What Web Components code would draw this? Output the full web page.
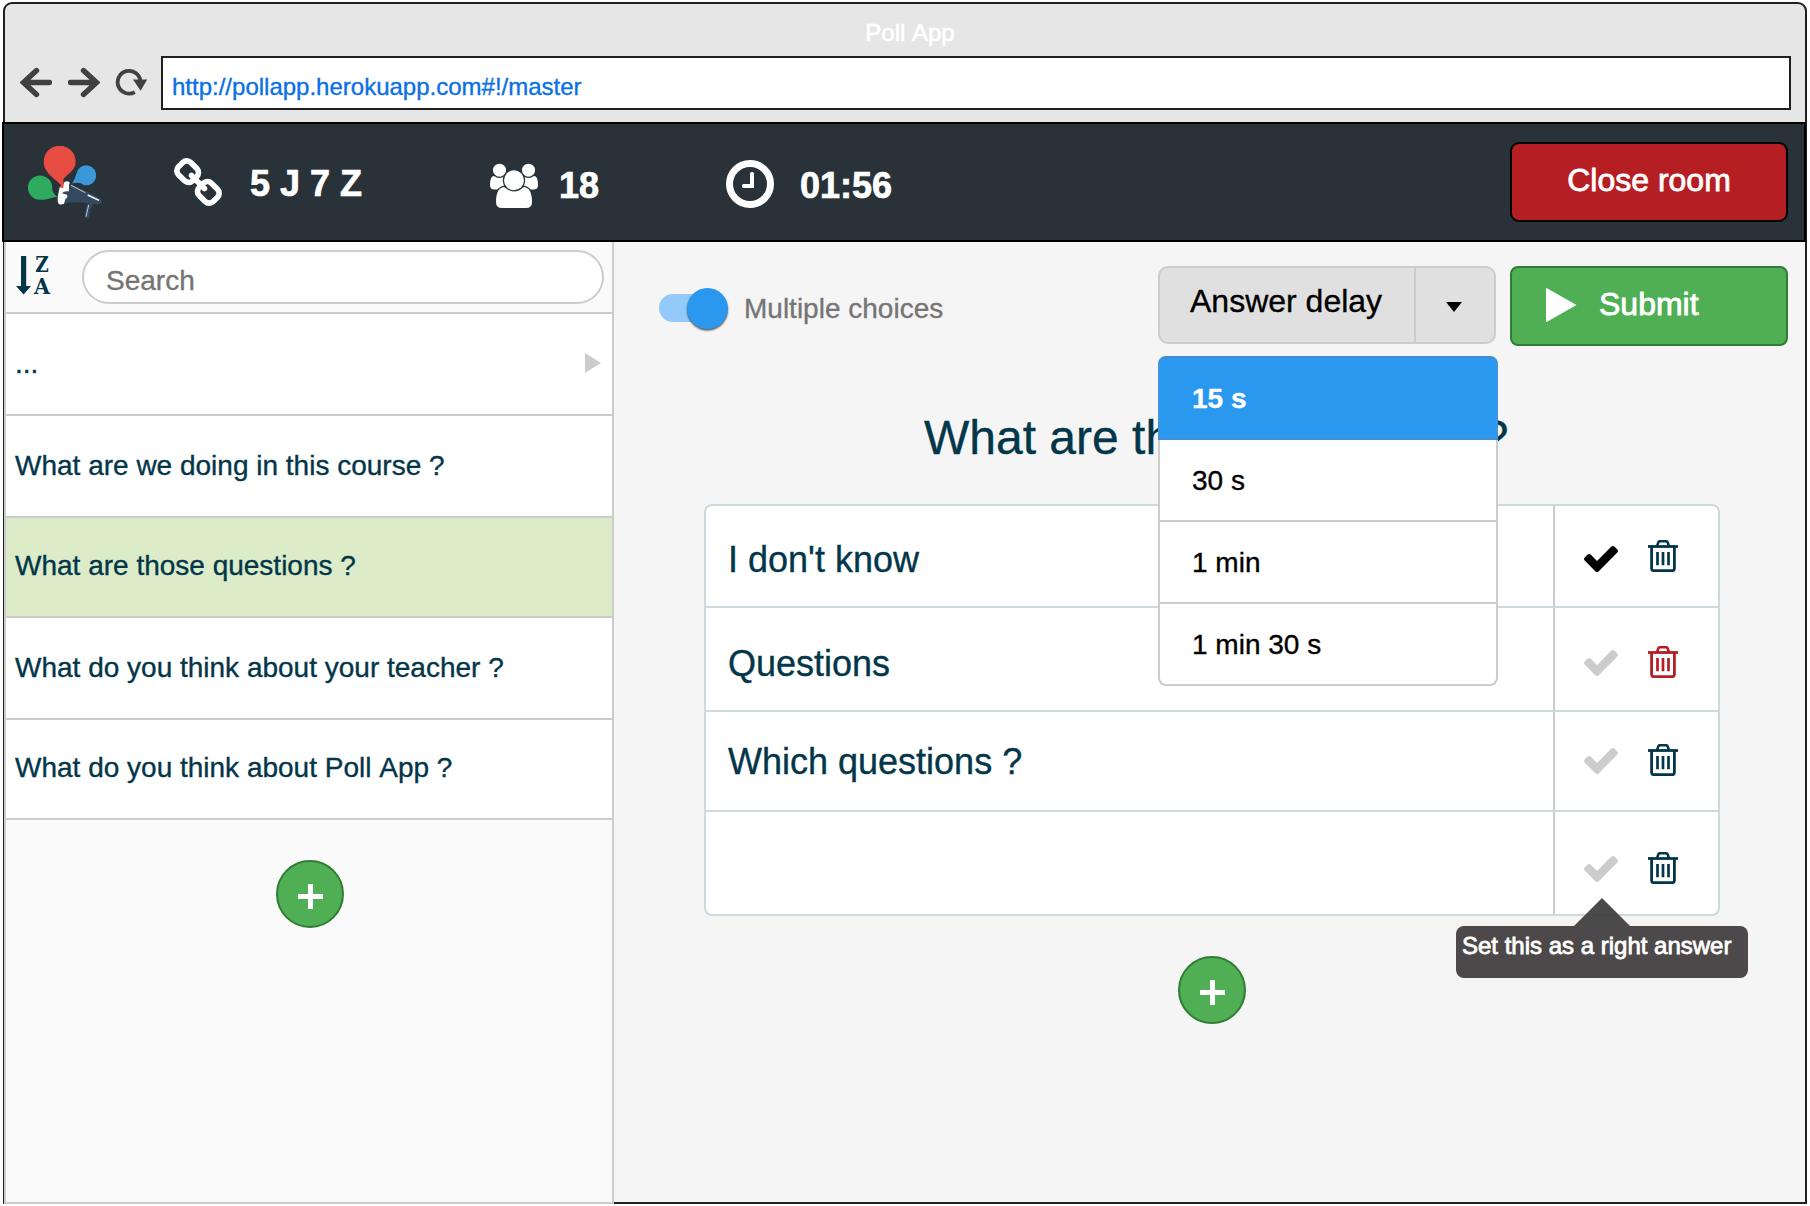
<!DOCTYPE html>
<html lang="en">
<head>
<meta charset="utf-8">
<title>Poll App</title>
<style>
  html, body { margin: 0; height: 100%; background: #fff; overflow: hidden; }
  body { font-family: "Liberation Sans", Arial, sans-serif; color: #033649; font-kerning: none; -webkit-text-stroke: .35px currentColor; }
</style>
</head>
<body>
<app-window heading="Poll App" url="http://pollapp.herokuapp.com#!/master">
  <room-header slot="header" code="5 J 7 Z" people="18" time="01:56">Close room</room-header>
  <question-sidebar slot="sidebar">
    <question-item folder style="--h:102px;--dy:-1px">...</question-item>
    <question-item style="--h:102px;--dy:0px">What are we doing in this course ?</question-item>
    <question-item selected style="--h:100px;--dy:-2px">What are those questions ?</question-item>
    <question-item style="--h:102px;--dy:0px">What do you think about your teacher ?</question-item>
    <question-item style="--h:100px;--dy:-2px">What do you think about Poll App ?</question-item>
  </question-sidebar>
  <question-editor slot="main" heading="What are those questions ?">
    <answer-row right style="--h:102px;--text:7px;--check:6px;--trash:0px">I don't know</answer-row>
    <answer-row danger style="--h:104px;--text:9px;--check:8px;--trash:6px">Questions</answer-row>
    <answer-row style="--h:100px;--text:1px;--check:0px;--trash:-2px">Which questions ?</answer-row>
    <answer-row tip="Set this as a right answer" style="--h:102px;--text:0px;--check:12px;--trash:10px"></answer-row>
  </question-editor>
</app-window>

<script>
const ICONS = {
  back: ['20 66.500 32 32', 32, 32, '<path d="M49.500 82H24M36.500 70L23.500 82L36.500 94" fill="none" stroke="#414141" stroke-width="5.400" stroke-linecap="round" stroke-linejoin="miter"/>'],
  forward: ['68 66.500 32 32', 32, 32, '<path d="M70.500 82H96M83.500 70L96.500 82L83.500 94" fill="none" stroke="#414141" stroke-width="5.400" stroke-linecap="round" stroke-linejoin="miter"/>'],
  reload: ['115 66.500 33 32', 33, 32, '<path d="M134.800 91.600A11.400 11.400 0 1 1 140.400 80.500" fill="none" stroke="#414141" stroke-width="3.800"/><path d="M133 79L147.200 79L140.600 90.200Z" fill="#414141"/>'],
  logo: ['84 48 222 216', 74, 72, `
    <path d="M190 175C180 152 131 135 131 95A48 48 0 1 1 227 95C227 125 193 136 190 150Z" fill="#e64c42"/>
    <path d="M172 200C150 204 143 209 120 209.500A36.500 36.500 0 1 1 156.500 173Q156 190 172 200Z" fill="#2eab61"/>
    <path d="M216 160C226 146 227 136 229 132A30 30 0 1 1 251 165Q240 154 216 160Z" fill="#3b98d9"/>
    <path d="M186 172L194 155Q207 151 210 160L212 184L198 216Q186 228 176 221Q171 215 174 196L179 172Z" fill="#fff"/>
    <path d="M207 160L292 200Q306 206 306 219Q299 226 282 221Q272 228 267 263L254 263L261 219Q225 214 192 221L196 207Q205 202 201 194L186 190Q191 182 207 184Z" fill="#34495e"/>
    <path d="M213 166L256 188M266 225L258 260" fill="none" stroke="#dfe4e8" stroke-width="2.600"/>
    <path d="M263 195L297 211" fill="none" stroke="#fff" stroke-width="4.500"/>
    <path d="M179 171L191 157L190 175Z" fill="#e64c42"/>`],
  link: ['80 16 1632 1632', 48, 48, '<path fill="#fff" d="M1520 1216q0-40-28-68l-208-208q-28-28-68-28-42 0-72 32 3 3 19 18.500t21.500 21.500 15 19 13 25.500 3.500 27.500q0 40-28 68t-68 28q-15 0-27.500-3.500t-25.500-13-19-15-21.500-21.500-18.500-19q-33 31-33 73 0 40 28 68l206 207q27 27 68 27 40 0 68-26l147-146q28-28 28-67zm-703-705q0-40-28-68l-206-207q-28-28-68-28-39 0-68 27l-147 146q-28 28-28 67 0 40 28 68l208 208q27 27 68 27 42 0 72-31-3-3-19-18.500t-21.500-21.500-15-19-13-25.500-3.500-27.500q0-40 28-68t68-28q15 0 27.500 3.500t25.500 13 19 15 21.500 21.500 18.500 19q33-31 33-73zm895 705q0 120-85 203l-147 146q-83 83-203 83-121 0-204-85l-206-207q-83-83-83-203 0-123 88-209l-88-88q-86 88-208 88-120 0-204-84l-208-208q-84-84-84-204t85-203l147-146q83-83 203-83 121 0 204 85l206 207q83 83 83 203 0 123-88 209l88 88q86-88 208-88 120 0 204 84l208 208q84 84 84 204z"/>'],
  users: ['490 163 48 46', 48, 46, `<g fill="#fff">
    <path d="M494 176Q499.500 180 505 176L508 189.500H494.500Q490 189.500 490 185Q490 176 494 176Z"/>
    <path d="M534 176Q528.500 180 523 176L520 189.500H533.500Q538 189.500 538 185Q538 176 534 176Z"/>
    <circle cx="499.500" cy="170.200" r="6.500" stroke="#283238" stroke-width="1.600" paint-order="stroke"/><circle cx="528.500" cy="170.200" r="6.500" stroke="#283238" stroke-width="1.600" paint-order="stroke"/>
    <path d="M504 187Q514 194 524 187Q532 188 532 202Q532 208 526 208H502Q496 208 496 202Q496 188 504 187Z" stroke="#283238" stroke-width="2.400" paint-order="stroke"/>
    <circle cx="514" cy="180.300" r="10" stroke="#283238" stroke-width="2.400" paint-order="stroke"/></g>`],
  clock: ['0 0 48 48', 48, 48, '<circle cx="24" cy="24" r="20.500" fill="none" stroke="#fff" stroke-width="7"/><path d="M24 13.500Q24 12 25.500 12H26.500Q28 12 28 13.500V28H17.500Q16 28 16 26.500V25.500Q16 24 17.500 24H24Z" fill="#fff"/>'],
  sort: ['10 243 50 64', 50, 64, `<path d="M21 256H26.200V286H31L23.600 294.500L16 286H21Z" fill="#033649"/>
    <text x="35.300" y="272" textLength="13.500" lengthAdjust="spacingAndGlyphs" font-family="DejaVu Serif, serif" font-weight="bold" font-size="21.500" fill="#033649">Z</text>
    <text x="34" y="294" textLength="16" lengthAdjust="spacingAndGlyphs" font-family="DejaVu Serif, serif" font-weight="bold" font-size="21.500" fill="#033649">A</text>`],
  arrow: ['0 0 16 20', 16, 20, '<path d="M0 0L16 10L0 20Z" fill="#ccc"/>'],
  play: ['0 0 31 34', 31, 34, '<path d="M0 0.500Q0 -.4 1 .2L30.500 17L1 33.800Q0 34.400 0 33.500Z" fill="#fff"/>'],
  caret: ['0 0 16 10', 16, 10, '<path d="M0 0H16L8 10Z" fill="#000"/>'],
  plus: ['0 0 25 25', 25, 25, '<path d="M10 0H15V10H25V15H15V25H10V15H0V10H10Z" fill="#fff"/>'],
  check: ['121 334 1550 1188', 34, 26, '<path fill="currentColor" d="M1671 566q0 40-28 68l-724 724-136 136q-28 28-68 28t-68-28l-136-136-362-362q-28-28-28-68t28-68l136-136q28-28 68-28t68 28l294 295 656-657q28-28 68-28t68 28l136 136q28 28 28 68z"/>'],
  trash: ['0 0 30 32', 30, 32, '<g fill="none" stroke="currentColor"><path d="M0 6.500H30" stroke-width="2.800"/><path d="M9 6.500L10.200 2.600Q10.700 1.200 12 1.200H18Q19.300 1.200 19.800 2.600L21 6.500" stroke-width="2.600"/><path d="M3.600 7V28.500Q3.600 30.700 5.800 30.700H24.200Q26.400 30.700 26.400 28.500V7" stroke-width="2.800"/><path d="M9.500 12V25.300M15 12V25.300M20.500 12V25.300" stroke-width="2.700"/></g>']
};

function define(name, render) {
  customElements.define(name, class extends HTMLElement {
    connectedCallback() {
      if (this.shadowRoot) return;
      this.attachShadow({ mode: 'open' }).innerHTML = render(this);
    }
  });
}

define('ui-icon', el => {
  const [box, w, h, body] = ICONS[el.getAttribute('name')];
  return `<style>:host{display:block;flex:none;width:${w}px;height:${h}px;-webkit-text-stroke:0}svg{display:block}</style>
    <svg width="${w}" height="${h}" viewBox="${box}">${body}</svg>`;
});

define('add-button', () => `<style>
  :host{display:flex;flex:none;box-sizing:border-box;width:68px;height:68px;border:2px solid #2e7d32;border-radius:50%;background:#50af55;align-items:center;justify-content:center;padding:5px 0 0 1px}
  </style><ui-icon name="plus"></ui-icon>`);

define('app-window', el => `<style>
  :host{display:flex;flex-direction:column;box-sizing:border-box;width:1804px;height:1202px;margin:2px 3px;border:2px solid #231f20;border-radius:9px 9px 0 0;background:#e6e6e6}
  .chrome{height:118px;box-sizing:border-box;flex:none;padding:0 14px 12px 15px;display:flex;flex-direction:column}
  .title{height:52px;line-height:58px;text-align:center;color:#fff;font-size:24px;padding-left:9px;-webkit-text-stroke:.7px #fff}
  .bar{display:flex;align-items:center;height:54px}
  .bar ui-icon+ui-icon{margin-left:16px}
  .bar ui-icon:nth-of-type(3){margin-left:15px}
  .url{flex:1;box-sizing:border-box;height:54px;margin-left:13px;border:2px solid #231f20;background:#fff;color:#0b6fe6;font-size:24px;line-height:57px;padding-left:9px}
  .page{flex:1;display:flex;min-height:0}
  ::slotted([slot=main]){flex:1;min-width:0}
  </style>
  <div class="chrome">
    <div class="title">${el.getAttribute('heading')}</div>
    <div class="bar"><ui-icon name="back"></ui-icon><ui-icon name="forward"></ui-icon><ui-icon name="reload"></ui-icon><div class="url">${el.getAttribute('url')}</div></div>
  </div>
  <slot name="header"></slot>
  <div class="page"><slot name="sidebar"></slot><slot name="main"></slot></div>`);

define('room-header', el => `<style>
  :host{display:flex;flex:none;box-sizing:border-box;height:120px;margin:0 -1px 0 -3px;border:2px solid #000;background:#283238;color:#fff;font-weight:bold;font-size:36px;line-height:40px;align-items:flex-start;padding:18px 16px 0 24px}
  .stat{display:flex}
  .stat span{-webkit-text-stroke:.7px #fff}
  .link{margin:16px 0 0 72px;gap:28px;width:190px}
  .link span{margin-top:6px}
  .users{margin:21px 0 0 126px;gap:21px;width:110px}
  .users span{margin-top:3px}
  .clock{margin:18px 0 0 126px;gap:26px}
  .clock span{margin-top:6px}
  button{all:unset;box-sizing:border-box;margin-left:auto;width:278px;height:80px;border:2px solid #000;border-radius:9px;background:#b51e23;font:32px "Liberation Sans",sans-serif;line-height:40px;padding-bottom:5px;text-align:center;color:#fff;-webkit-text-stroke:.8px #fff}
  </style>
  <ui-icon name="logo" style="margin-top:4px"></ui-icon>
  <div class="stat link"><ui-icon name="link"></ui-icon><span>${el.getAttribute('code')}</span></div>
  <div class="stat users"><ui-icon name="users"></ui-icon><span>${el.getAttribute('people')}</span></div>
  <div class="stat clock"><ui-icon name="clock"></ui-icon><span>${el.getAttribute('time')}</span></div>
  <button><slot></slot></button>`);

define('question-sidebar', () => `<style>
  :host{display:flex;flex-direction:column;flex:none;box-sizing:border-box;width:610px;margin:0 0 -2px -1px;border:2px solid #ccc;border-top:0;background:#fafafa;font-size:28px}
  .tools{display:flex;flex:none;box-sizing:border-box;height:72px;border-bottom:2px solid #ccc;padding:8px 8px 0 4px}
  .tools ui-icon{margin-top:-7px}
  .search{flex:1;box-sizing:border-box;height:54px;margin-left:22px;border:2px solid #ccc;border-radius:27px;background:#fff;color:#757575;line-height:57px;padding-left:22px}
  add-button{margin:40px 0 0 270px}
  </style>
  <div class="tools"><ui-icon name="sort"></ui-icon><div class="search">Search</div></div>
  <slot></slot><add-button></add-button>`);

define('question-item', el => `<style>
  :host{display:flex;flex:none;box-sizing:border-box;height:var(--h);border-bottom:2px solid #ccc;background:#fff;align-items:center;justify-content:space-between;padding:0 11px 0 9px}
  :host([selected]){background:#dcebc8}
  span{line-height:32px;margin-top:var(--dy)}
  ui-icon{margin-top:-2px}
  </style><span><slot></slot></span>${el.hasAttribute('folder') ? '<ui-icon name="arrow"></ui-icon>' : ''}`);

define('toggle-switch', () => `<style>
  :host{display:flex;align-items:center;gap:16px;height:40px;font-size:28px;line-height:40px;color:#757575}
  .track{display:flex;align-items:center;justify-content:flex-end;width:69px;height:28px;border-radius:14px;background:linear-gradient(90deg,#94caf9 55px,transparent 55px)}
  .knob{width:41px;height:41px;flex:none;border-radius:50%;background:#2b98f0;box-shadow:0 1.500px 2px rgba(0,0,0,.65)}
  span{padding-top:2px}
  </style><div class="track"><div class="knob"></div></div><span><slot></slot></span>`);

define('delay-menu', () => `<style>
  :host{position:absolute;z-index:3;left:0;top:90px;width:340px;box-sizing:border-box;height:330px;display:flex;flex-direction:column;border:2px solid #ccc;border-radius:8px;background:#fff;font-size:28px;color:#000}
  div{box-sizing:border-box;height:82px;border-bottom:2px solid #ccc;line-height:82px;padding-left:32px}
  div:last-child{border:0}
  .on{height:84px;margin:-2px -2px 0;border:2px solid #418fd1;border-left-color:#3f94dd;border-right-color:#3f94dd;border-radius:8px 8px 0 0;background:#2b98f0;color:#fff;font-weight:bold;line-height:82px}
  </style><div class="on">15 s</div><div>30 s</div><div>1 min</div><div>1 min 30 s</div>`);

define('delay-select', () => `<style>
  :host{display:flex;position:relative;box-sizing:border-box;width:338px;height:78px;border:2px solid #ccc;border-radius:10px;background:#e0e0e0;color:#000;font-size:32px}
  .label{width:256px;box-sizing:border-box;border-right:2px solid #ccc;padding-left:30px;line-height:66px}
  .more{padding:34px 0 0 30px}
  delay-menu{left:-2px;top:88px}
  </style><div class="label"><slot></slot></div><div class="more"><ui-icon name="caret"></ui-icon></div><delay-menu></delay-menu>`);

define('submit-button', () => `<style>
  :host{display:flex;box-sizing:border-box;width:278px;height:80px;border:2px solid #2e7d32;border-radius:8px;background:#50af55;color:#fff;font-size:32px;line-height:73px;padding-left:34px;-webkit-text-stroke:.8px #fff}
  ui-icon{margin:20px 22px 0 0}
  </style><ui-icon name="play"></ui-icon><slot></slot>`);

define('answer-tip', () => `<style>
  :host{position:absolute;z-index:2;left:-128px;top:42px;width:292px;display:block}
  .tri{width:56px;height:28px;margin-left:118px;background:rgba(64,64,64,.95);clip-path:polygon(50% 0,100% 100%,0 100%)}
  .box{height:52px;border-radius:8px;background:#4d4849;color:#fff;font-size:24px;line-height:40px;padding-left:6px;white-space:nowrap;-webkit-text-stroke:.8px #fff}
  </style><div class="tri"></div><div class="box"><slot></slot></div>`);

define('answer-row', el => `<style>
  :host{display:flex;box-sizing:border-box;height:var(--h);border-bottom:2px solid #cfd8dc;font-size:36px}
  :host(:last-of-type){border-bottom:0}
  .text{flex:1;display:flex;align-items:center;padding-left:22px;border-right:2px solid #ccc}
  .text span{line-height:40px;margin-top:var(--text)}
  .actions{width:163px;box-sizing:border-box;padding-left:29px;display:flex;align-items:center;gap:30px}
  .check{position:relative;color:${el.hasAttribute('right') ? '#000' : '#ccc'};margin-top:var(--check)}
  .trash{color:${el.hasAttribute('danger') ? '#b51e23' : '#033649'};margin-top:var(--trash)}
  </style>
  <div class="text"><span><slot></slot></span></div>
  <div class="actions"><div class="check"><ui-icon name="check"></ui-icon>${el.hasAttribute('tip') ? `<answer-tip>${el.getAttribute('tip')}</answer-tip>` : ''}</div>
  <div class="trash"><ui-icon name="trash"></ui-icon></div></div>`);

define('question-editor', el => `<style>
  :host{display:flex;flex-direction:column;background:#f5f5f5;box-sizing:border-box;padding:24px 17px 0 45px}
  .top{display:flex;height:80px;flex:none}
  toggle-switch{margin:22px auto 0 0}
  submit-button{margin-left:14px}
  h1{margin:62px 0 36px 265px;font-size:48px;font-weight:normal;line-height:60px;height:60px}
  .answers{flex:none;box-sizing:border-box;width:1016px;height:412px;margin-left:45px;border:2px solid #cfd8dc;border-radius:8px;background:#fff}
  add-button{margin:40px 0 0 519px}
  </style>
  <div class="top"><toggle-switch>Multiple choices</toggle-switch><delay-select>Answer delay</delay-select><submit-button>Submit</submit-button></div>
  <h1>${el.getAttribute('heading')}</h1>
  <div class="answers"><slot></slot></div>
  <add-button></add-button>`);
</script>
</body>
</html>
